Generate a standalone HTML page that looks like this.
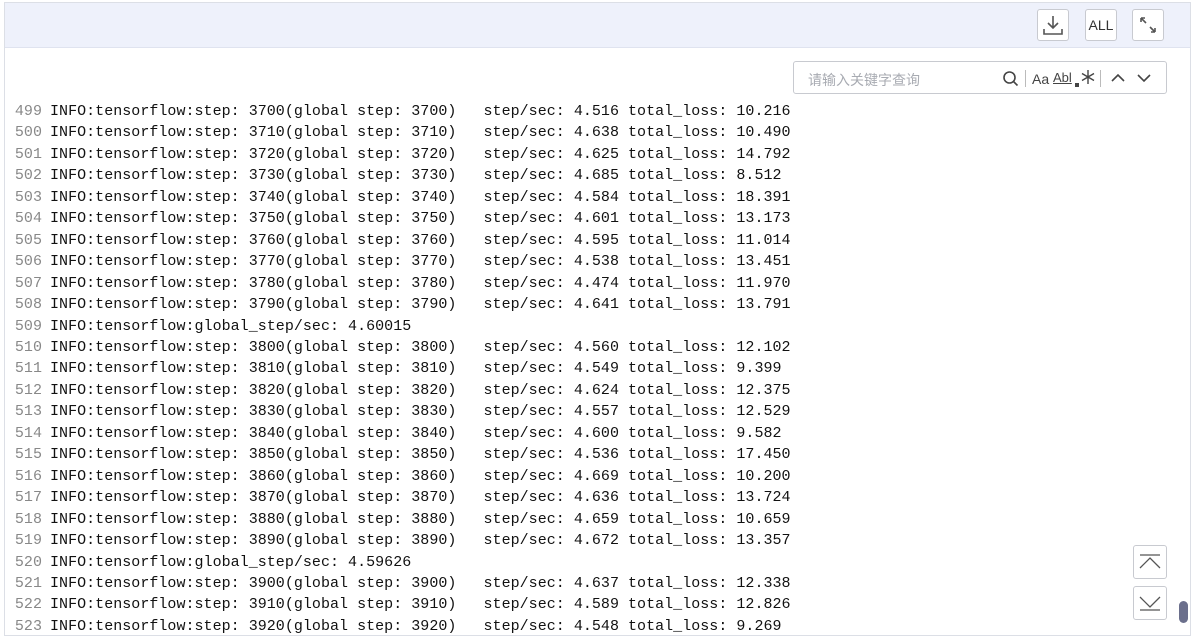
<!DOCTYPE html>
<html><head><meta charset="utf-8"><style>
body{margin:0;background:#fff;width:1195px;height:641px;overflow:hidden;font-family:"Liberation Sans","Noto Sans CJK SC",sans-serif}
.box{position:absolute;left:4px;top:2px;width:1185px;height:632px;border:1px solid #dcdfe6;overflow:hidden}
.hdr{position:absolute;left:0;top:0;right:0;height:44px;background:#eef1fb;border-bottom:1px solid #dfe3ef}
.btn{position:absolute;top:6px;width:32px;height:32px;border:1px solid #c8cad0;border-radius:3px;background:#fff;box-sizing:border-box;display:flex;align-items:center;justify-content:center}
.search{position:absolute;left:788px;top:58px;width:374px;height:33px;border:1px solid #c8cad0;border-radius:3px;box-sizing:border-box;font-size:14px;color:#a8abb2}
.log{position:absolute;left:0;top:98px;font-family:"Liberation Mono",monospace;font-size:15px;line-height:21.45px;white-space:pre;color:#111;letter-spacing:0.03px}
.log span{display:inline-block;width:37px;text-align:right;color:#888;margin-right:8px}
.sb{position:absolute;width:34px;height:34px;border:1px solid #c8cad0;border-radius:3px;box-sizing:border-box;background:#fff}
</style></head><body>
<div class="box">
<div class="hdr">
<div class="btn" style="left:1032px"><svg width="22" height="22" viewBox="0 0 22 22" fill="none" stroke="#555" stroke-width="1.6"><path d="M11 2v12M6 9l5 5 5-5M2 15v5h18v-5"/></svg></div>
<div class="btn" style="left:1080px;font-size:14px;color:#333">ALL</div>
<div class="btn" style="left:1127px"><svg width="20" height="20" viewBox="0 0 20 20" fill="none" stroke="#555" stroke-width="1.6"><path d="M3 3l5 5M3 3h4M3 3v4M17 17l-5-5M17 17h-4M17 17v-4"/></svg></div>
</div>
<div class="search">
<span style="position:absolute;left:14px;top:8px">请输入关键字查询</span>
<svg style="position:absolute;left:208px;top:8px" width="18" height="18" viewBox="0 0 18 18" fill="none" stroke="#444" stroke-width="1.6"><circle cx="7.5" cy="7.5" r="5.5"/><path d="M11.5 11.5l4 4"/></svg>
<div style="position:absolute;left:231px;top:8px;width:1px;height:17px;background:#bbb"></div>
<span style="position:absolute;left:238px;top:9px;color:#444;font-size:14px">Aa</span>
<span style="position:absolute;left:259px;top:8px;color:#444;font-size:13px;text-decoration:underline">Abl</span>
<span style="position:absolute;left:281px;top:21px;width:4px;height:4px;background:#444"></span>
<svg style="position:absolute;left:286px;top:7px" width="16" height="16" viewBox="0 0 16 16" fill="none" stroke="#444" stroke-width="1.4"><path d="M8 1v14M2 4.5l12 7M14 4.5l-12 7"/></svg>
<div style="position:absolute;left:306px;top:8px;width:1px;height:17px;background:#bbb"></div>
<svg style="position:absolute;left:316px;top:9px" width="50" height="14" viewBox="0 0 50 14" fill="none" stroke="#444" stroke-width="1.6"><path d="M2 10l6-6 6 6M28 4l6 6 6-6"/></svg>
</div>
<div class="log"><span>499</span>INFO:tensorflow:step: 3700(global step: 3700)   step/sec: 4.516 total_loss: 10.216
<span>500</span>INFO:tensorflow:step: 3710(global step: 3710)   step/sec: 4.638 total_loss: 10.490
<span>501</span>INFO:tensorflow:step: 3720(global step: 3720)   step/sec: 4.625 total_loss: 14.792
<span>502</span>INFO:tensorflow:step: 3730(global step: 3730)   step/sec: 4.685 total_loss: 8.512
<span>503</span>INFO:tensorflow:step: 3740(global step: 3740)   step/sec: 4.584 total_loss: 18.391
<span>504</span>INFO:tensorflow:step: 3750(global step: 3750)   step/sec: 4.601 total_loss: 13.173
<span>505</span>INFO:tensorflow:step: 3760(global step: 3760)   step/sec: 4.595 total_loss: 11.014
<span>506</span>INFO:tensorflow:step: 3770(global step: 3770)   step/sec: 4.538 total_loss: 13.451
<span>507</span>INFO:tensorflow:step: 3780(global step: 3780)   step/sec: 4.474 total_loss: 11.970
<span>508</span>INFO:tensorflow:step: 3790(global step: 3790)   step/sec: 4.641 total_loss: 13.791
<span>509</span>INFO:tensorflow:global_step/sec: 4.60015
<span>510</span>INFO:tensorflow:step: 3800(global step: 3800)   step/sec: 4.560 total_loss: 12.102
<span>511</span>INFO:tensorflow:step: 3810(global step: 3810)   step/sec: 4.549 total_loss: 9.399
<span>512</span>INFO:tensorflow:step: 3820(global step: 3820)   step/sec: 4.624 total_loss: 12.375
<span>513</span>INFO:tensorflow:step: 3830(global step: 3830)   step/sec: 4.557 total_loss: 12.529
<span>514</span>INFO:tensorflow:step: 3840(global step: 3840)   step/sec: 4.600 total_loss: 9.582
<span>515</span>INFO:tensorflow:step: 3850(global step: 3850)   step/sec: 4.536 total_loss: 17.450
<span>516</span>INFO:tensorflow:step: 3860(global step: 3860)   step/sec: 4.669 total_loss: 10.200
<span>517</span>INFO:tensorflow:step: 3870(global step: 3870)   step/sec: 4.636 total_loss: 13.724
<span>518</span>INFO:tensorflow:step: 3880(global step: 3880)   step/sec: 4.659 total_loss: 10.659
<span>519</span>INFO:tensorflow:step: 3890(global step: 3890)   step/sec: 4.672 total_loss: 13.357
<span>520</span>INFO:tensorflow:global_step/sec: 4.59626
<span>521</span>INFO:tensorflow:step: 3900(global step: 3900)   step/sec: 4.637 total_loss: 12.338
<span>522</span>INFO:tensorflow:step: 3910(global step: 3910)   step/sec: 4.589 total_loss: 12.826
<span>523</span>INFO:tensorflow:step: 3920(global step: 3920)   step/sec: 4.548 total_loss: 9.269</div>
<div class="sb" style="left:1128px;top:542px"><svg width="32" height="32" viewBox="0 0 32 32" fill="none" stroke="#555" stroke-width="1.3"><path d="M6 9h20M6 22l10-10 10 10"/></svg></div>
<div class="sb" style="left:1128px;top:583px"><svg width="32" height="32" viewBox="0 0 32 32" fill="none" stroke="#555" stroke-width="1.3"><path d="M6 23h20M6 10l10 10 10-10"/></svg></div>
<div style="position:absolute;left:1174px;top:598px;width:9px;height:22px;border-radius:5px;background:#6b6f8c"></div>
</div>
</body></html>
